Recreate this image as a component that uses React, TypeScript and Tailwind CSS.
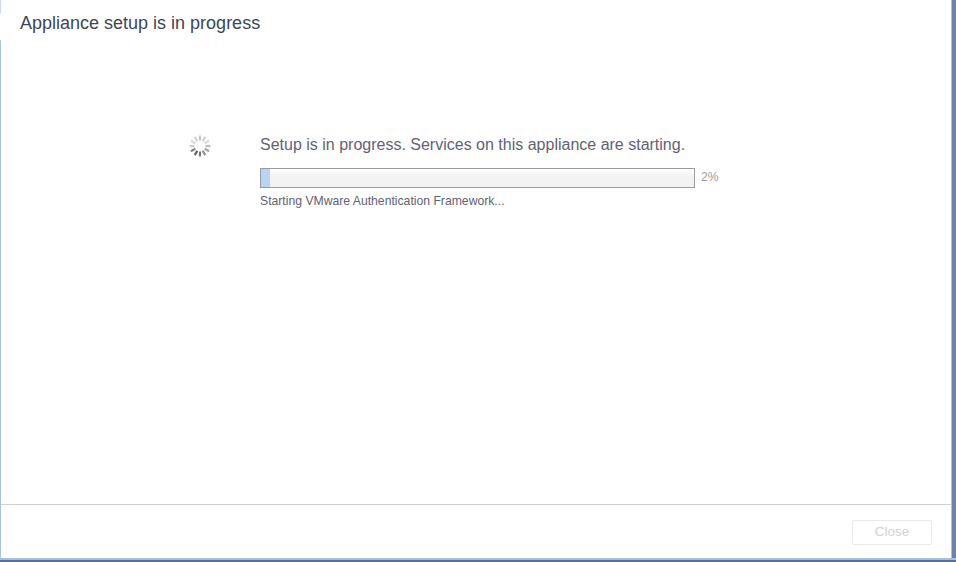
const TICKS = [
  { deg: 0, color: '#c4c6c8' },
  { deg: 30, color: '#cfd1d2' },
  { deg: 60, color: '#d6d8d8' },
  { deg: 90, color: '#b9bbbc' },
  { deg: 120, color: '#a3a5a7' },
  { deg: 150, color: '#8c8e91' },
  { deg: 180, color: '#75777b' },
  { deg: 210, color: '#626468' },
  { deg: 240, color: '#828487' },
  { deg: 270, color: '#c9cbcc' },
  { deg: 300, color: '#d6d8d8' },
  { deg: 330, color: '#d0d2d3' },
]

function Spinner() {
  return (
    <svg width="24" height="24" viewBox="0 0 24 24" className="block">
      {TICKS.map(t => (
        <line
          key={t.deg}
          x1="12"
          y1="6.5"
          x2="12"
          y2="1.5"
          stroke={t.color}
          strokeWidth="2.2"
          transform={`rotate(${t.deg} 12 12)`}
        />
      ))}
    </svg>
  )
}

export default function App() {
  return (
    <div className="flex h-[562px] w-[956px] flex-col overflow-hidden bg-white font-['Liberation_Sans',Arial,sans-serif]">
      <div className="flex min-h-0 flex-1">
        <div className="flex w-[1px] flex-col">
          <div className="h-[13px] bg-[#c9d8f0]" />
          <div className="h-[27px] bg-white" />
          <div className="flex-1 bg-[#a9c2ea]" />
        </div>

        <div className="flex min-w-0 flex-1 flex-col">
          <div className="flex h-[40px] items-start pl-[19px] pt-[13px]">
            <h1 className="text-[18px] leading-[20px] text-[#3c4656]">Appliance setup is in progress</h1>
          </div>

          <div className="flex flex-1 pt-[95px]">
            <div className="ml-[187px] -mt-[1px] h-[24px] w-[24px]">
              <Spinner />
            </div>
            <div className="ml-[48px]">
              <p className="text-[16px] leading-[20px] text-[#5f6276]">
                Setup is in progress. Services on this appliance are starting.
              </p>
              <div className="mt-[13px] flex items-center">
                <div className="h-[20px] w-[435px] border border-[#999b9e] bg-gradient-to-b from-white to-[#f3f3f3] to-40%">
                  <div className="h-full w-[9px] bg-[#b8d4f3]" />
                </div>
                <span className="ml-[6px] -mt-[2px] text-[12px] text-[#9a9c9f]">2%</span>
              </div>
              <p className="mt-[6px] text-[12.2px] leading-[14px] text-[#5f6276]">
                Starting VMware Authentication Framework...
              </p>
            </div>
          </div>

          <div className="flex h-[54px] items-start justify-end border-t border-[#d0d2d2] pr-[19px] pt-[15px]">
            <button
              disabled
              className="h-[25px] w-[80px] rounded-[2px] border border-[#e8e9ea] bg-white text-[13.5px] text-[#d0d2d4]"
            >
              Close
            </button>
          </div>
        </div>

        <div className="w-[1px] bg-[#a9c2ea]" />
        <div className="w-[4px] bg-[#6f83a3]" />
      </div>
      <div className="h-[2px] bg-[#a9bfdd]" />
      <div className="h-[2px] bg-[#53719c]" />
    </div>
  )
}
